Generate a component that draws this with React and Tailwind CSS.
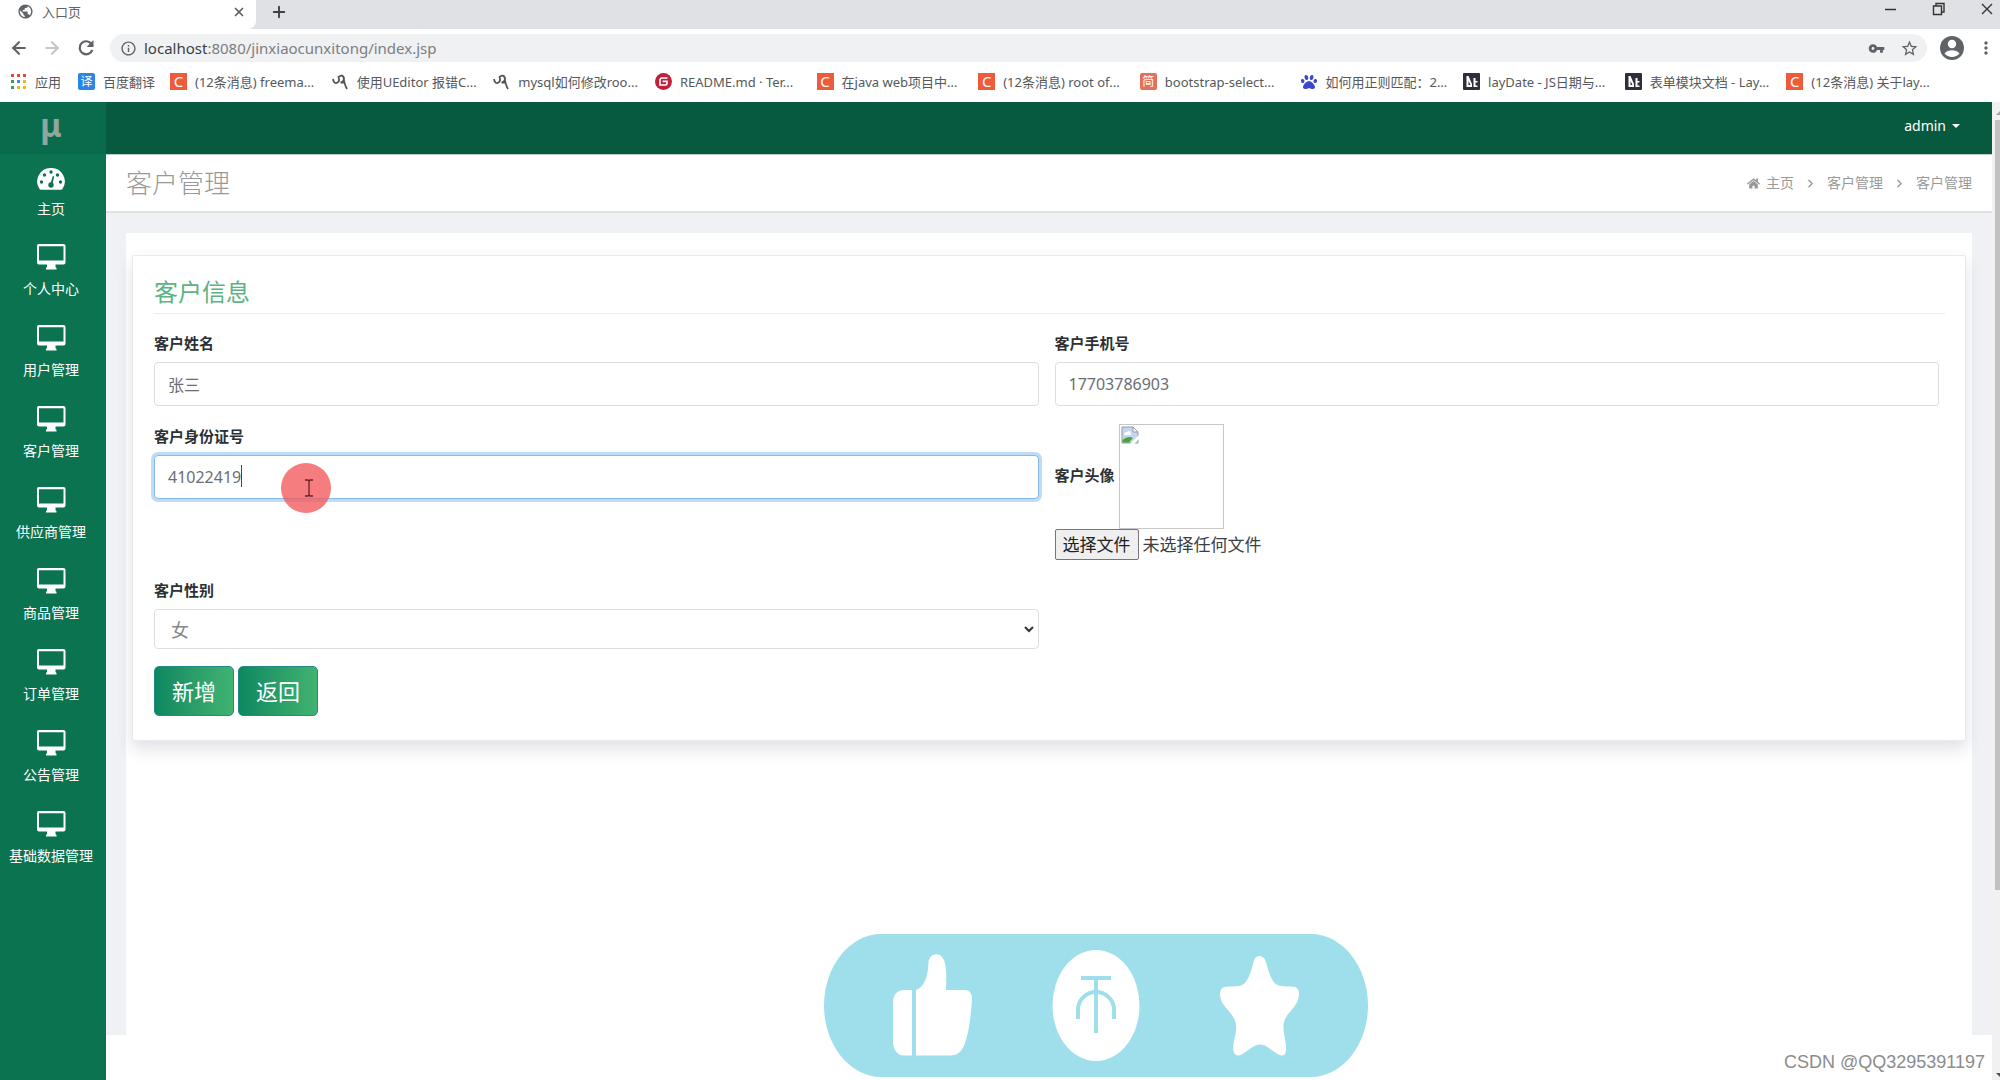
import { useState } from "react";
import { MdVpnKey, MdStarBorder, MdMoreVert, MdPublic, MdInfoOutline } from "react-icons/md";
import { FaHome, FaPaw } from "react-icons/fa";
import { ArrowLeft, ArrowRight, ChevronRight, Plus, X } from "lucide-react";

const bookmarks = [
    { icon: "csdn", text: "(12条消息) freema..." },
    { icon: "ueditor", text: "使用UEditor 报错C..." },
    { icon: "ueditor", text: "mysql如何修改roo..." },
    { icon: "gitee", text: "README.md · Ter..." },
    { icon: "csdn", text: "在java web项目中..." },
    { icon: "csdn", text: "(12条消息) root of..." },
    { icon: "jian", text: "bootstrap-select..." },
    { icon: "baidu", text: "如何用正则匹配：2..." },
    { icon: "lay", text: "layDate - JS日期与..." },
    { icon: "lay", text: "表单模块文档 - Lay..." },
    { icon: "csdn", text: "(12条消息) 关于lay..." },
];

const menus = [
    "个人中心",
    "用户管理",
    "客户管理",
    "供应商管理",
    "商品管理",
    "订单管理",
    "公告管理",
    "基础数据管理",
];

const appColors = [
    "#e8453c", "#e8453c", "#e8453c",
    "#34a058", "#4285f4", "#f5b912",
    "#34a058", "#f5b912", "#f5b912",
];

function BookmarkIcon({ type }) {
    const box = "flex size-[17px] shrink-0 items-center justify-center leading-none";
    if (type === "csdn") return <span className={`${box} bg-[#ee5a3a] text-[15px] text-white`}>C</span>;
    if (type === "jian") return <span className={`${box} rounded-xs bg-[#e4705c] text-[12px] text-white`}>简</span>;
    if (type === "fanyi") return <span className={`${box} rounded-xs bg-[#2a84ea] text-[12px] text-white`}>译</span>;
    if (type === "gitee") return (
        <svg viewBox="0 0 17 17" className="size-[17px] shrink-0">
            <circle cx="8.5" cy="8.5" r="8.5" fill="#c0203a" />
            <path d="M12.5 5H7.2Q5 5 5 7.2V12H10.5Q12 12 12 10.5V8.4H7.6" fill="none" stroke="#fff" strokeWidth="1.6" />
        </svg>
    );
    if (type === "baidu") return <FaPaw className="size-[16px] shrink-0 text-[#3a48cf]" />;
    if (type === "lay") return (
        <svg viewBox="0 0 17 17" className="size-[17px] shrink-0">
            <rect width="17" height="17" rx="1" fill="#2f2f3b" />
            <path d="M3.500 3H5.500L9 11V14H3.500ZM10.500 5H12.500V8H14.500V9.500H12.500V12.500H14.500V14H10.500Z" fill="#fff" />
            <path d="M5.500 8V12H7.500Z" fill="#2f2f3b" />
        </svg>
    );
    return (
        <svg viewBox="0 0 17 17" className="size-[17px] shrink-0" fill="none" stroke="#555" strokeWidth="1.8">
            <path d="M1 6Q2 11.500 5.500 9.500Q8 8 6.500 4Q11 1 12 5Q12 9 8.500 9.500H12.500M11.500 4Q12.500 12 15 16" />
        </svg>
    );
}

function Browser() {
    return (
        <header className="text-[#5f6368]">
            <div className="flex h-[29px] items-center bg-[#dfe1e5]">
                <div className="flex h-full w-[256px] items-center rounded-br-lg bg-white pr-[10px] pb-[6px] pl-[17px]">
                    <MdPublic className="size-[17px]" />
                    <span className="ml-2 flex-1 text-[13px] leading-4">入口页</span>
                    <button type="button" aria-label="关闭标签页"><X className="size-[14px]" strokeWidth={3} /></button>
                </div>
                <button type="button" aria-label="新标签页" className="ml-[14px] pb-[6px] text-[#3c4043]"><Plus className="size-[18px]" strokeWidth={2.5} /></button>
                <div className="ml-auto flex items-center gap-[34px] pr-[6px] pb-[12px] text-[#333]">
                    <button type="button" aria-label="最小化">
                        <svg viewBox="0 0 14 14" className="size-[14px]"><path d="M1 7.500H12" stroke="currentColor" strokeWidth="1.5" /></svg>
                    </button>
                    <button type="button" aria-label="还原">
                        <svg viewBox="0 0 14 14" className="size-[14px]" fill="none" stroke="currentColor" strokeWidth="1.4">
                            <path d="M1.500 4H9.500V12.500H1.500ZM4 4V1.500H12V10H9.500" />
                        </svg>
                    </button>
                    <button type="button" aria-label="关闭">
                        <svg viewBox="0 0 14 14" className="size-[14px]" fill="none" stroke="currentColor" strokeWidth="1.4"><path d="M2 2L12 12M12 2L2 12" /></svg>
                    </button>
                </div>
            </div>

            <div className="flex h-[38px] items-center bg-white pr-1 pl-[9px]">
                <button type="button" aria-label="后退"><ArrowLeft className="size-[20px]" strokeWidth={2.5} /></button>
                <button type="button" aria-label="前进" className="ml-[13px] text-[#c4c6c9]"><ArrowRight className="size-[20px]" strokeWidth={2.5} /></button>
                <button type="button" aria-label="刷新" className="ml-[15px]">
                    <svg viewBox="0 0 18 18" className="size-[18px]">
                        <path d="M14.500 5A6.500 6.500 0 1 0 15.300 11" fill="none" stroke="currentColor" strokeWidth="2.200" />
                        <path d="M16.500 1V8H9.500Z" fill="currentColor" />
                    </svg>
                </button>
                <div className="ml-[15px] flex h-[28px] flex-1 items-center rounded-full bg-[#f0f1f3] pr-2 pl-[10px]">
                    <MdInfoOutline className="size-[17px]" />
                    <span className="ml-[7px] flex-1 text-[15px] leading-5 text-[#7b7e82]">
                        <span className="text-[#3c4043]">localhost</span>:8080/jinxiaocunxitong/index.jsp
                    </span>
                    <button type="button" aria-label="密码"><MdVpnKey className="size-[17px]" /></button>
                    <button type="button" aria-label="收藏" className="ml-[15px]"><MdStarBorder className="size-[19px]" /></button>
                </div>
                <button type="button" aria-label="用户" className="ml-[13px]">
                    <svg viewBox="0 0 24 24" className="size-[24px]">
                        <circle cx="12" cy="12" r="12" fill="currentColor" />
                        <circle cx="12" cy="8" r="4.200" fill="#fff" />
                        <path d="M4.500 17.500C7 13 17 13 19.500 17.500C16 22 8 22 4.500 17.500Z" fill="#fff" />
                    </svg>
                </button>
                <button type="button" aria-label="更多" className="ml-3"><MdMoreVert className="size-[20px]" /></button>
            </div>

            <nav className="flex h-[35px] items-center bg-white pb-[6px] pl-[11px] text-[13px] leading-4 text-[#55585c]">
                <a href="#apps" className="flex w-[67px] items-center gap-[9px]">
                    <svg viewBox="0 0 15 15" className="size-[15px]">
                        {appColors.map((c, i) => (
                            <rect key={i} x={(i % 3) * 6} y={Math.floor(i / 3) * 6} width="3" height="3" fill={c} />
                        ))}
                    </svg>
                    应用
                </a>
                <a href="#fanyi" className="flex w-[92px] items-center gap-2">
                    <BookmarkIcon type="fanyi" />百度翻译
                </a>
                <div className="grid min-w-0 flex-1 grid-cols-11 pr-[52px]">
                    {bookmarks.map((b, i) => (
                        <a key={i} href="#bookmark" className="flex items-center gap-2 whitespace-nowrap">
                            <BookmarkIcon type={b.icon} />{b.text}
                        </a>
                    ))}
                </div>
            </nav>
        </header>
    );
}

function DashboardIcon() {
    return (
        <svg viewBox="0 0 28 22" className="h-[22px] w-[28px]">
            <path d="M14 0A13.500 13.500 0 0 0 2.500 21Q3 21.800 4 21.800H24Q25 21.800 25.500 21A13.500 13.500 0 0 0 14 0Z" fill="#fff" />
            <g fill="#0b7350">
                <circle cx="4.500" cy="14" r="1.700" />
                <circle cx="7.500" cy="7" r="1.700" />
                <circle cx="14" cy="4" r="1.700" />
                <circle cx="20.500" cy="7" r="1.700" />
                <circle cx="23.500" cy="14" r="1.700" />
                <circle cx="14" cy="17" r="2.700" />
                <path d="M13.300 16L15.800 8L17.200 8.400L15.200 17Z" />
            </g>
        </svg>
    );
}

function DesktopIcon() {
    return (
        <svg viewBox="0 0 30 26" className="h-[26px] w-[30px]">
            <path
                fillRule="evenodd"
                d="M2.500 0H27.500Q29.500 0 29.500 2V18.500Q29.500 20.500 27.500 20.500H19.500V23L20.500 24V25.500H10V24L11 23V20.500H3Q1 20.500 1 18.500V2Q1 0 2.500 0ZM3 2.200V16.500H27.500V2.200Z"
                fill="#fff"
            />
        </svg>
    );
}

function Sidebar() {
    return (
        <aside className="w-[106px] shrink-0 bg-[#0b7350] text-center text-[14px] leading-5 text-white">
            <div className="flex h-[52px] items-center justify-center bg-[#096b4b] pr-1 pb-[6px] text-[32px] leading-8 font-bold text-[#8fa79e]">μ</div>
            <nav>
                <a href="#home" className="flex h-[81px] flex-col items-center justify-between pt-[14px] pr-1 pb-4">
                    <DashboardIcon />主页
                </a>
                {menus.map((name) => (
                    <a key={name} href="#menu" className="flex h-[81px] flex-col items-center justify-between pt-[9px] pr-1 pb-[17px] whitespace-nowrap">
                        <DesktopIcon />{name}
                    </a>
                ))}
            </nav>
        </aside>
    );
}

const labelClass = "mb-[7px] block text-[15px] leading-6 font-bold text-[#2b3035]";
const inputClass = "block h-[44px] w-full rounded-sm border bg-white px-[13px] text-[16px] text-[#6a6e72] outline-none";
const buttonClass = "h-[50px] w-[80px] rounded-[5px] border border-[#23898a] bg-linear-to-r from-[#0b8860] to-[#40b371] text-[22px] leading-8 text-white";

function CustomerForm() {
    const [name, setName] = useState("张三");
    const [phone, setPhone] = useState("17703786903");
    const [idNumber, setIdNumber] = useState("41022419");

    return (
        <form className="mx-[6px] mt-[22px] rounded-xs border border-[#e9eaec] bg-white pt-[20px] pr-[26px] pb-[24px] pl-[21px] shadow-[0_8px_16px_rgba(60,70,110,0.16)]">
            <h2 className="text-[24px] leading-8 text-[#5cb483]">客户信息</h2>
            <hr className="-mr-[6px] mt-[5px] mb-[17px] border-[#ededf0]" />

            <div className="grid grid-cols-2 gap-x-4 gap-y-[18px]">
                <div>
                    <label htmlFor="name" className={labelClass}>客户姓名</label>
                    <input id="name" className={`${inputClass} border-[#dcdee0]`} value={name} onChange={(e) => setName(e.target.value)} />
                </div>
                <div>
                    <label htmlFor="phone" className={labelClass}>客户手机号</label>
                    <input id="phone" className={`${inputClass} border-[#dcdee0]`} value={phone} onChange={(e) => setPhone(e.target.value)} />
                </div>

                <div>
                    <label htmlFor="idNumber" className={labelClass}>客户身份证号</label>
                    <div className="relative">
                        <input
                            id="idNumber"
                            className={`${inputClass} border-[#85b9ea] ring-3 ring-[#bfdcf7]`}
                            value={idNumber}
                            onChange={(e) => setIdNumber(e.target.value)}
                        />
                        {/* text caret */}
                        <span className="absolute top-[10px] left-[87px] h-[22px] w-px bg-[#444]" />
                        {/* click highlight with the mouse pointer */}
                        <span className="absolute top-[8px] left-[127px] flex size-[50px] items-center justify-center rounded-full bg-[#f25c5f]/80">
                            <svg viewBox="0 0 10 18" className="ml-[5px] h-[18px] w-[10px]" fill="none" stroke="#6b2226" strokeWidth="1.3">
                                <path d="M1 1H4L5 2L6 1H9M5 2V16M1 17H4L5 16L6 17H9" />
                            </svg>
                        </span>
                    </div>
                </div>
                <div>
                    <div className="flex items-center gap-[4px]">
                        <label htmlFor="avatar" className="pb-1 text-[15px] leading-6 font-bold text-[#2b3035]">客户头像</label>
                        <div className="size-[105px] border border-[#c8c8c8] p-px">
                            <svg viewBox="0 0 18 18" className="size-[18px]">
                                <path d="M1 1H12L17 6V17H1Z" fill="#c3d7f5" stroke="#9a9a9a" />
                                <path d="M3 9Q3 6 6 6Q9 3 10 8V9Z" fill="#fff" />
                                <path d="M1.500 16.500V14Q7 9 12 12L8 16.500Z" fill="#4ba33c" />
                                <path d="M12 1V6H17Z" fill="#fff" stroke="#9a9a9a" />
                                <path d="M9 18L18 9V13L13 18Z" fill="#fff" />
                            </svg>
                        </div>
                    </div>
                    <div className="flex items-center gap-[4px] text-[17px] leading-6 text-[#3c3f43]">
                        <label htmlFor="avatar" className="flex h-[31px] items-center rounded-xs border border-[#767676] bg-[#efefef] px-[7px] text-[#222]">选择文件</label>
                        <input id="avatar" type="file" className="sr-only" />
                        未选择任何文件
                    </div>
                </div>

                <div>
                    <label htmlFor="sex" className={labelClass}>客户性别</label>
                    <div className="relative">
                        <select id="sex" className="block h-[40px] w-full appearance-none rounded-sm border border-[#dcdee0] bg-white px-4 pt-[2px] text-[18px] text-[#85888b]">
                            <option>女</option>
                            <option>男</option>
                        </select>
                        <svg viewBox="0 0 10 7" className="pointer-events-none absolute top-[17px] right-[5px] h-[7px] w-[10px]" fill="none" stroke="#333" strokeWidth="2">
                            <path d="M1 1L5 5L9 1" />
                        </svg>
                    </div>
                </div>
            </div>

            <div className="mt-[17px] flex gap-[4px]">
                <button type="button" className={buttonClass}>新增</button>
                <button type="button" className={buttonClass}>返回</button>
            </div>
        </form>
    );
}

function RewardBar() {
    return (
        <div className="absolute bottom-[3px] left-[824px]">
            <svg viewBox="0 0 544 143" className="h-[143px] w-[544px]">
                <path d="M57 0H487C518 0 544 32 544 71.500S518 143 487 143H57C26 143 0 111 0 71.500S26 0 57 0Z" fill="#9fdfec" />
                <g fill="#fff">
                    <path d="M88 56V121.500H80C73 121.500 69 115 69 108V68C69 61 73 56 80 56Z" />
                    <path d="M92 56C102 52 104 40 104.500 28C106 18 119 17 121 30C123 38 122 48 122 56H141C146 56 148 60 148 65C147 82 145 96 142 106C139 117 134 121.500 126 121.500H92Z" />
                    <ellipse cx="272" cy="71.500" rx="43.500" ry="55.500" />
                    <path d="M429.500 28C431 20 440 20 442 28C445 39 448 50 455 51.500C462 53 468 52 472 53.500C477 56 475 65 472 70C468 77 460 82 459.500 91C459 100 463 110 462 117C461 123 456 122 452 119C447 116 442 110.500 436 110.500C430 110.500 425 116 420 119C416 122 411 123 409.500 117C408 110 413 100 412 91C411 82 404 77 399 70C396 65 394 57 399 53.500C403 52 411 53 417 51.500C424 49 427 38 429.500 28Z" />
                </g>
                <g fill="none" stroke="#9fdfec" strokeWidth="4">
                    <path d="M257 44H287M272 44V99" />
                    <path d="M254 85V76C254 65 263 58 272 58S290 65 290 76V85" />
                </g>
            </svg>
        </div>
    );
}

export default function App() {
    return (
        <div className="relative flex min-h-screen flex-col overflow-hidden bg-white font-['Noto_Sans','Noto_Sans_CJK_SC',sans-serif]">
            <Browser />
            <div className="flex flex-1">
                <Sidebar />
                <main className="flex min-w-0 flex-1 flex-col">
                    <div className="flex h-[53px] items-center justify-end border-b border-[#b9d0c7] bg-[#075a40] pr-[32px] pb-1">
                        <button type="button" className="flex items-center gap-[6px] text-[14px] leading-5 text-white">
                            admin
                            <svg viewBox="0 0 8 4" className="h-[4px] w-[8px]"><path d="M0 0H8L4 4Z" fill="#fff" /></svg>
                        </button>
                    </div>
                    <div className="flex h-[58px] items-center justify-between border-b-2 border-[#dfe1e4] bg-white px-[20px]">
                        <h1 className="text-[26px] leading-8 font-light text-[#999]">客户管理</h1>
                        <nav className="flex items-center text-[14px] leading-5 text-[#999]">
                            <FaHome className="mr-[6px] size-[13px]" />
                            <a href="#home">主页</a>
                            <ChevronRight className="mx-[10px] size-[13px]" strokeWidth={2.5} />
                            <a href="#customer">客户管理</a>
                            <ChevronRight className="mx-[10px] size-[13px]" strokeWidth={2.5} />
                            <a href="#customer">客户管理</a>
                        </nav>
                    </div>
                    <div className="flex flex-1 flex-col bg-[#f0f1f4] px-[20px] pt-[20px]">
                        <div className="flex flex-1 flex-col bg-white">
                            <CustomerForm />
                        </div>
                    </div>
                    <footer className="flex h-[45px] items-center justify-end bg-white pt-[9px] pr-[7px] font-['Liberation_Sans',sans-serif] text-[18px] leading-6 text-[#8c8c8c]">
                        CSDN @QQ3295391197
                    </footer>
                </main>
                {/* page scrollbar */}
                <div className="flex w-[8px] shrink-0 flex-col items-end bg-[#f1f1f1]">
                    <svg viewBox="0 0 5 18" className="h-[18px] w-[5px]"><path d="M1 13L5 9V13Z" fill="#a3a3a3" /></svg>
                    <div className="h-[770px] w-[5px] bg-[#c1c1c1]" />
                    <svg viewBox="0 0 5 18" className="mt-auto h-[18px] w-[5px]"><path d="M1 11H5V15Z" fill="#505050" /></svg>
                </div>
            </div>
            <RewardBar />
        </div>
    );
}
